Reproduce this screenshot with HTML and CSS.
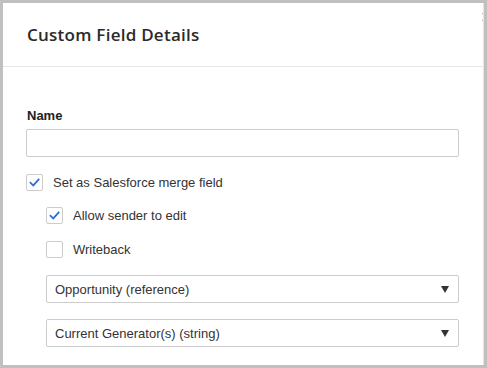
FILE: index.html
```html
<!DOCTYPE html>
<html>
<head>
<meta charset="utf-8">
<link rel="stylesheet" href="styles.css">
</head>
<body>
<div class="panel">
  <div class="header">
    <h1 class="title">Custom Field Details</h1>
    <span class="close">×</span>
  </div>
  <div class="content">
    <label class="label">Name</label>
    <div class="input"></div>
    <div class="check-row">
      <span class="box checked"><svg viewBox="0 0 17 17" width="17" height="17"><path d="M4.5 8.8 L7.3 11.4 L12.6 5.6" fill="none" stroke="#2d6fd6" stroke-width="1.8" stroke-linecap="square"/></svg></span>
      <span class="check-text">Set as Salesforce merge field</span>
    </div>
    <div class="sub">
      <div class="check-row">
        <span class="box checked"><svg viewBox="0 0 17 17" width="17" height="17"><path d="M4.5 8.8 L7.3 11.4 L12.6 5.6" fill="none" stroke="#2d6fd6" stroke-width="1.8" stroke-linecap="square"/></svg></span>
        <span class="check-text">Allow sender to edit</span>
      </div>
      <div class="check-row">
        <span class="box"></span>
        <span class="check-text">Writeback</span>
      </div>
      <div class="select"><span>Opportunity (reference)</span><span class="arrow"></span></div>
      <div class="select"><span>Current Generator(s) (string)</span><span class="arrow"></span></div>
    </div>
  </div>
</div>
</body>
</html>
```
FILE: styles.css
```css
html, body { margin: 0; padding: 0; }
body {
  background: #c0c0c0;
  padding: 3px;
  width: 481px;
  height: 362px;
}
.panel {
  position: relative;
  background: #fff;
  height: 362px;
  overflow: hidden;
  border-right: 1px solid #e6e6e6;
  box-sizing: border-box;
}
.header {
  height: 63px;
  border-bottom: 1px solid #e6e6e6;
  display: flex;
  align-items: center;
  padding-left: 24px;
}
.title {
  margin: 0;
  font-family: "Open Sans", sans-serif;
  font-weight: 600;
  font-size: 17px;
  color: #2a2a2a;
  letter-spacing: 0.25px;
}
.close {
  position: absolute;
  left: 477px;
  top: 4px;
  font-family: "DejaVu Sans", sans-serif;
  font-size: 16px;
  color: #777;
}
.content {
  padding: 41px 24px 0 23px;
  font-family: "Liberation Sans", Arial, sans-serif;
  font-size: 13px;
  color: #333;
}
.label {
  display: block;
  font-weight: bold;
  line-height: 16px;
  margin-left: 1px;
  color: #222;
}
.input {
  margin-top: 5px;
  height: 26px;
  border: 1px solid #ccc;
  border-radius: 2px;
}
.check-row {
  display: flex;
  align-items: center;
  gap: 10px;
  margin-top: 17px;
}
.content > .check-row { margin-top: 17px; }
.box {
  width: 17px;
  height: 17px;
  border: 1px solid #ccc;
  border-radius: 2px;
  box-sizing: border-box;
  display: flex;
  align-items: center;
  justify-content: center;
}
.box svg { display: block; margin: -1px; }
.sub { padding-left: 20px; }
.sub .check-row:first-child { margin-top: 16px; }
.check-text { line-height: 16px; }
.select {
  margin-top: 17px;
  height: 26px;
  border: 1px solid #ccc;
  border-radius: 2px;
  display: flex;
  align-items: center;
  justify-content: space-between;
  padding: 0 9px 0 8px;
}
.sub .check-row + .select { margin-top: 17px; }
.select + .select { margin-top: 16px; }
.arrow {
  width: 0;
  height: 0;
  border-left: 4px solid transparent;
  border-right: 4px solid transparent;
  border-top: 7px solid #333;
}
```
